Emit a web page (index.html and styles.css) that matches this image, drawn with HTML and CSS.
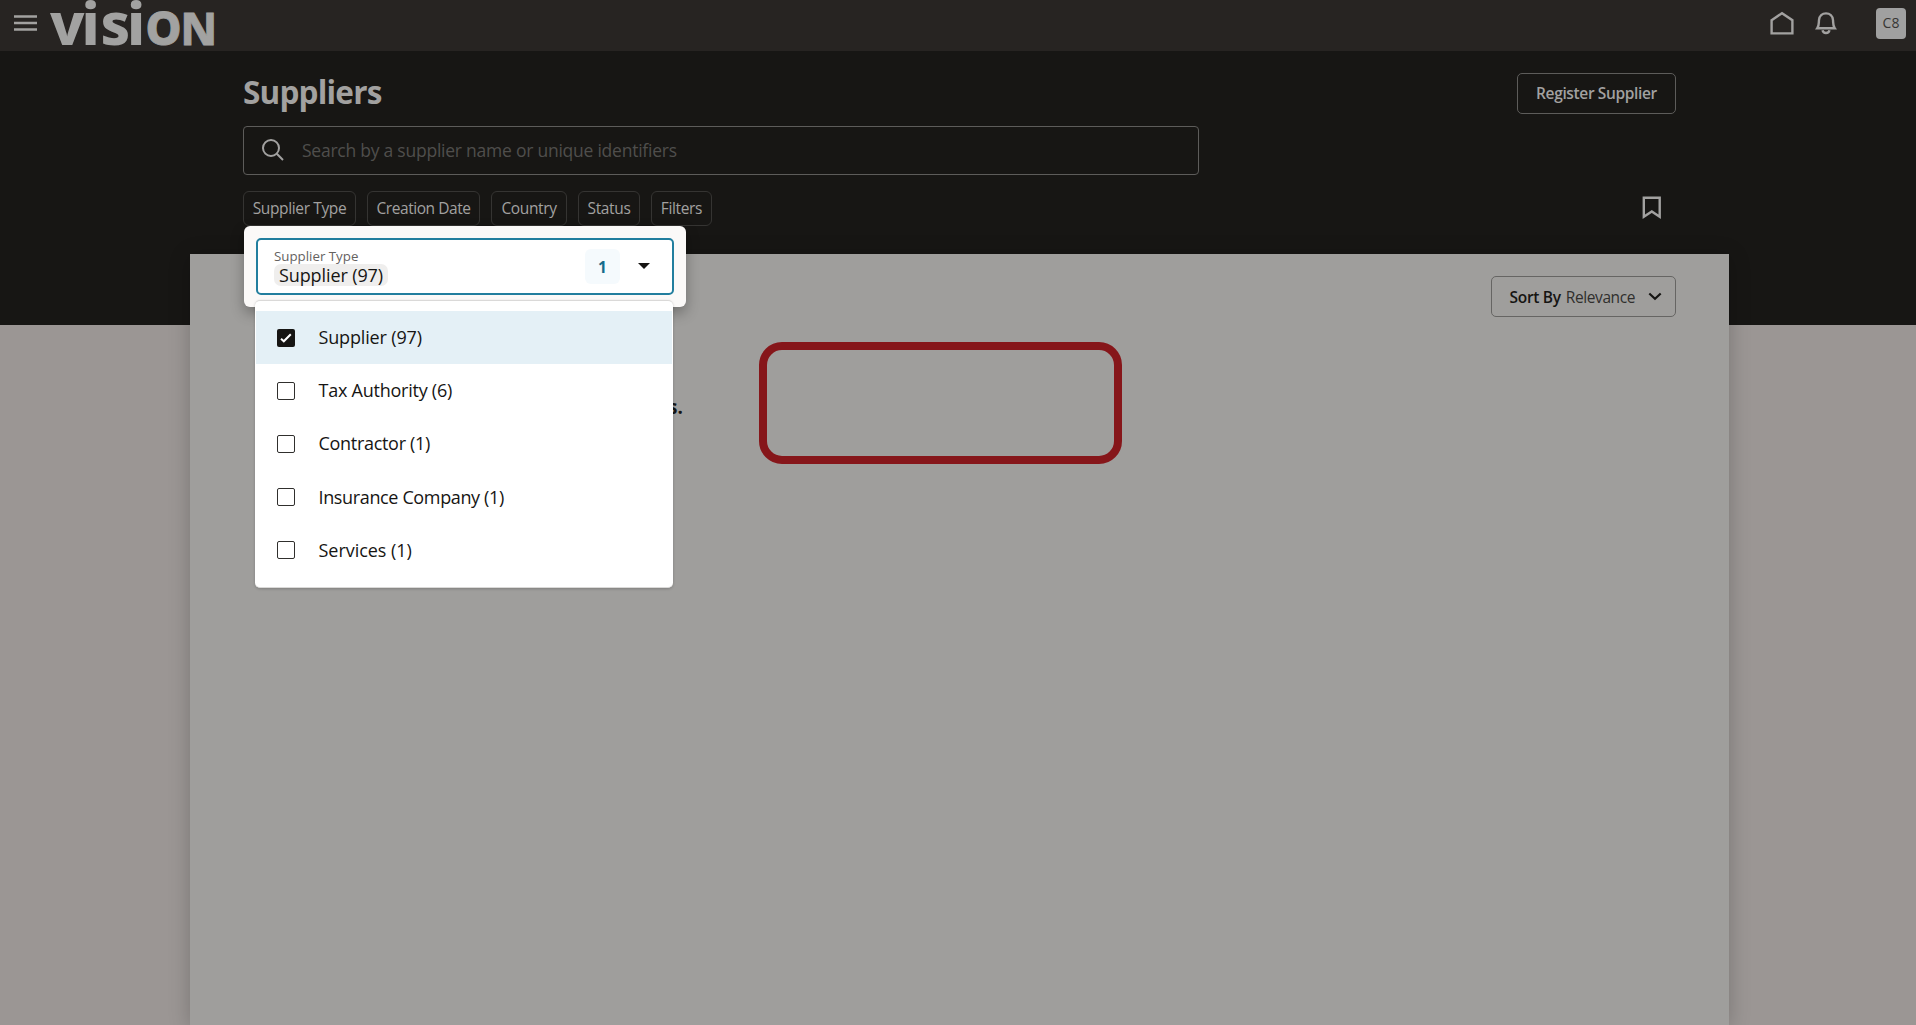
FILE: index.html
```
<!DOCTYPE html>
<html lang="en">
<head>
<meta charset="utf-8">
<title>Suppliers</title>
<link rel="stylesheet" href="styles.css">
</head>
<body>
<header class="topbar">
  <svg class="menu-icon" width="23" height="17" viewBox="0 0 23 17"><path d="M0 1.5h23M0 8h23M0 14.5h23"/></svg>
  <svg class="logo" width="170" height="51" viewBox="0 0 170 51" role="img" aria-label="Vision">
    <text y="45"><tspan class="logo-low" x="0">v</tspan><tspan class="logo-low" x="31.5">i</tspan><tspan class="logo-low" x="50.5">s</tspan><tspan class="logo-low" x="77">i</tspan><tspan class="logo-cap" x="95.5">O</tspan><tspan class="logo-cap logo-n" x="130.5">N</tspan></text>
  </svg>
  <div class="topbar-actions">
    <svg class="home" width="24" height="24" viewBox="0 0 24 24"><path d="M1.6 9.2 12 2.2l10.400 7V22.400H1.600Z"/></svg>
    <svg class="bell" width="22" height="24" viewBox="0 0 22 24"><path d="M2.300 17.200C4.200 14.500 3.700 12 4 9c.4-4 3.200-6.600 7-6.600S17.600 5 18 9c.3 3-.2 5.500 1.700 8.200ZM7.500 19.300c.8 3.600 6.200 3.600 7 0"/></svg>
    <div class="avatar">C8</div>
  </div>
</header>

<section class="hero">
  <div class="hero-inner">
    <div class="title-row">
      <h1>Suppliers</h1>
      <button class="register">Register Supplier</button>
    </div>
    <div class="search">
      <svg width="24" height="24" viewBox="0 0 24 24"><circle cx="10" cy="10" r="8"/><path d="m15.800 15.800 6.200 6.200"/></svg>
      <span>Search by a supplier name or unique identifiers</span>
    </div>
    <div class="chip-row">
      <div class="chip chip-type">Supplier Type</div>
      <div class="chip chip-date">Creation Date</div>
      <div class="chip chip-country">Country</div>
      <div class="chip chip-status">Status</div>
      <div class="chip chip-filters">Filters</div>
      <svg class="bookmark" width="20" height="24" viewBox="0 0 20 24"><path d="M1.800 1.800h15.900v19L9.800 15.500l-8 5.300Z"/></svg>
      <div class="popup">
        <div class="field">
          <div class="field-value">
            <div class="field-label">Supplier Type</div>
            <div class="tag">Supplier (97)</div>
          </div>
          <div class="count">1</div>
          <svg class="caret" width="12" height="6" viewBox="0 0 12 6"><path d="M0 0h12L6 6Z"/></svg>
        </div>
        <ul class="options">
          <li class="option selected"><span class="box checked"><svg width="18" height="18" viewBox="0 0 18 18"><path d="m4 9.800 2.800 2.500 7-7"/></svg></span><span class="w-supplier">Supplier (97)</span></li>
          <li class="option"><span class="box"></span><span class="w-tax">Tax Authority (6)</span></li>
          <li class="option"><span class="box"></span><span class="w-contractor">Contractor (1)</span></li>
          <li class="option"><span class="box"></span><span class="w-insurance">Insurance Company (1)</span></li>
          <li class="option"><span class="box"></span><span class="w-services">Services (1)</span></li>
        </ul>
      </div>
    </div>
  </div>
</section>

<main class="panel">
  <div class="sort-row">
    <button class="sort"><b>Sort By</b><span>Relevance</span><svg width="14" height="9" viewBox="0 0 14 9"><path d="m1.300 1.500 5.700 5.300 5.700-5.300"/></svg></button>
  </div>
  <div class="results">
    <p class="message">s.</p>
    <div class="highlight"></div>
  </div>
</main>
</body>
</html>
```
FILE: styles.css
```
* { box-sizing: border-box; }
body {
  margin: 0;
  height: 1025px;
  overflow: hidden;
  background: linear-gradient(#171614 325px, #9b9694 325px);
  font-family: "Open Sans", "Noto Sans", sans-serif;
  font-size: 15.5px;
  color: #161513;
  display: flex;
  flex-direction: column;
}
button { font: inherit; background: none; padding: 0; }
svg { display: block; flex: none; }
svg path, svg circle { fill: none; stroke: #a2a1a0; stroke-width: 2.4; }

.topbar {
  height: 51px;
  flex: none;
  display: flex;
  align-items: flex-start;
  padding: 0 10px 0 14px;
  background: #272422;
}
.menu-icon { margin-top: 15px; }
.menu-icon path { stroke-width: 2.6; }
.logo { margin-left: 13px; overflow: visible; }
.logo text { fill: #a2a2a1; font-family: "Noto Sans", sans-serif; font-weight: 800; }
.logo-low { font-size: 58.5px; }
.logo-cap { font-size: 45.5px; stroke: #a2a2a1; stroke-width: 0.8px; }
.logo-n { font-size: 44.5px; }
.topbar-actions { margin-left: auto; display: flex; padding-top: 11px; }
.home { margin-right: -1px; }
.bell { margin-left: 22px; }
.avatar {
  width: 30px;
  height: 31px;
  margin: -3px 0 0 39px;
  border-radius: 4px;
  background: #a0a0a0;
  color: #373634;
  font-size: 14px;
  line-height: 29px;
  text-align: center;
}

.hero { height: 203px; flex: none; padding: 22px 240px 0 243px; }
.hero-inner { display: flex; flex-direction: column; }
.title-row { height: 41px; display: flex; justify-content: space-between; }
h1 {
  margin: 0;
  font-size: 31.5px;
  line-height: 38px;
  font-weight: 700;
  letter-spacing: -0.8px;
  color: #a2a1a0;
}
.register {
  width: 159px;
  height: 41px;
  padding-bottom: 2px;
  border: 1px solid #5d5c5a;
  border-radius: 5px;
  color: #a2a1a0;
  font-weight: 600;
  letter-spacing: -0.36px;
}
.search {
  width: 956px;
  height: 49px;
  margin-top: 12px;
  padding: 0 0 2px 17px;
  display: flex;
  align-items: center;
  border: 1px solid #5d5c5a;
  border-radius: 4px;
  color: #4f4e4c;
  font-size: 17.5px;
  letter-spacing: -0.24px;
}
.search svg circle, .search svg path { stroke-width: 2; }
.search span { margin-left: 17px; }
.chip-row { position: relative; display: flex; gap: 11px; margin-top: 16px; height: 35px; }
.chip {
  height: 35px;
  line-height: 32px;
  border: 1px solid #353432;
  border-radius: 6px;
  text-align: center;
  color: #a2a1a0;
  letter-spacing: -0.36px;
  white-space: nowrap;
}
.chip-type { width: 113px; }
.chip-date { width: 113px; letter-spacing: -0.45px; }
.chip-country { width: 76px; }
.chip-status { width: 62px; }
.chip-filters { width: 61px; }
.bookmark { margin: 5px 14px 0 auto; }

.popup {
  position: absolute;
  z-index: 2;
  left: 1px;
  top: 35px;
  width: 442px;
  height: 81px;
  padding: 12px;
  border-radius: 6px;
  background: #fbf9f8;
  box-shadow: 0 6px 14px rgba(0, 0, 0, .3);
}
.field {
  width: 418px;
  height: 57px;
  padding: 0 22px 0 16px;
  display: flex;
  align-items: center;
  border: 2px solid #227e9e;
  border-radius: 5px;
  background: #fff;
}
.field-value { align-self: flex-start; padding-top: 9px; }
.field-label { font-size: 13.3px; line-height: 15px; font-weight: 500; color: #65625f; }
.tag {
  width: 114px;
  height: 22px;
  line-height: 22px;
  border-radius: 7px;
  background: #efeeed;
  text-align: center;
  font-size: 18px;
  letter-spacing: -0.11px;
}
.count {
  width: 35px;
  height: 35px;
  margin-left: auto;
  border-radius: 6px;
  background: #f5fafd;
  color: #166b8b;
  font-weight: 700;
  line-height: 36px;
  text-align: center;
}
.caret { margin: -2px 0 0 18px; }
.caret path { fill: #161513; stroke: none; }
.options {
  position: absolute;
  left: 11px;
  top: 74px;
  width: 418px;
  height: 288px;
  margin: 0;
  padding: 10px 1px;
  list-style: none;
  border: 1px solid #dad9d8;
  border-width: 1px 0;
  border-radius: 5px;
  background: #fff;
  box-shadow: 0 1px 3px rgba(0, 0, 0, .2);
}
.option { height: 53.2px; display: flex; align-items: center; padding-left: 20.5px; font-size: 18px; }
.option > span:last-child { margin-top: -1px; }
.option.selected { background: #e4f0f6; }
.box { width: 18px; height: 18px; margin-right: 24px; border: 1.8px solid #302f2d; border-radius: 2px; }
.box.checked { background: #161513; border: 0; }
.box svg path { stroke: #fff; stroke-width: 2; }
.w-supplier { letter-spacing: -0.15px; }
.w-tax { letter-spacing: -0.24px; }
.w-contractor { letter-spacing: -0.3px; }
.w-insurance { letter-spacing: -0.36px; }
.w-services { letter-spacing: -0.04px; }

.panel {
  width: 1539px;
  flex: 1;
  margin-left: 190px;
  padding: 22px 53px 0;
  background: #9f9e9c;
  box-shadow: 0 3px 20px rgba(0, 0, 0, .22);
}
.sort-row { display: flex; justify-content: flex-end; }
.sort {
  width: 185px;
  height: 41px;
  padding: 0 13px 0 17.5px;
  display: flex;
  align-items: center;
  border: 1px solid #666563;
  border-radius: 5px;
  color: #161513;
}
.sort b { font-weight: 600; letter-spacing: -0.3px; }
.sort span { margin-left: 5px; letter-spacing: -0.4px; color: #302f2d; }
.sort svg { margin: -1px 0 0 auto; }
.sort svg path { stroke: #161513; stroke-width: 2.2; }
.results { display: flex; margin-top: 25px; }
.message { width: 516px; margin: 52px 0 0; padding-left: 425px; font-size: 19px; line-height: 26px; font-weight: 700; }
.highlight { width: 363px; height: 122px; border: 8px solid #86161a; border-radius: 23px; }
```
